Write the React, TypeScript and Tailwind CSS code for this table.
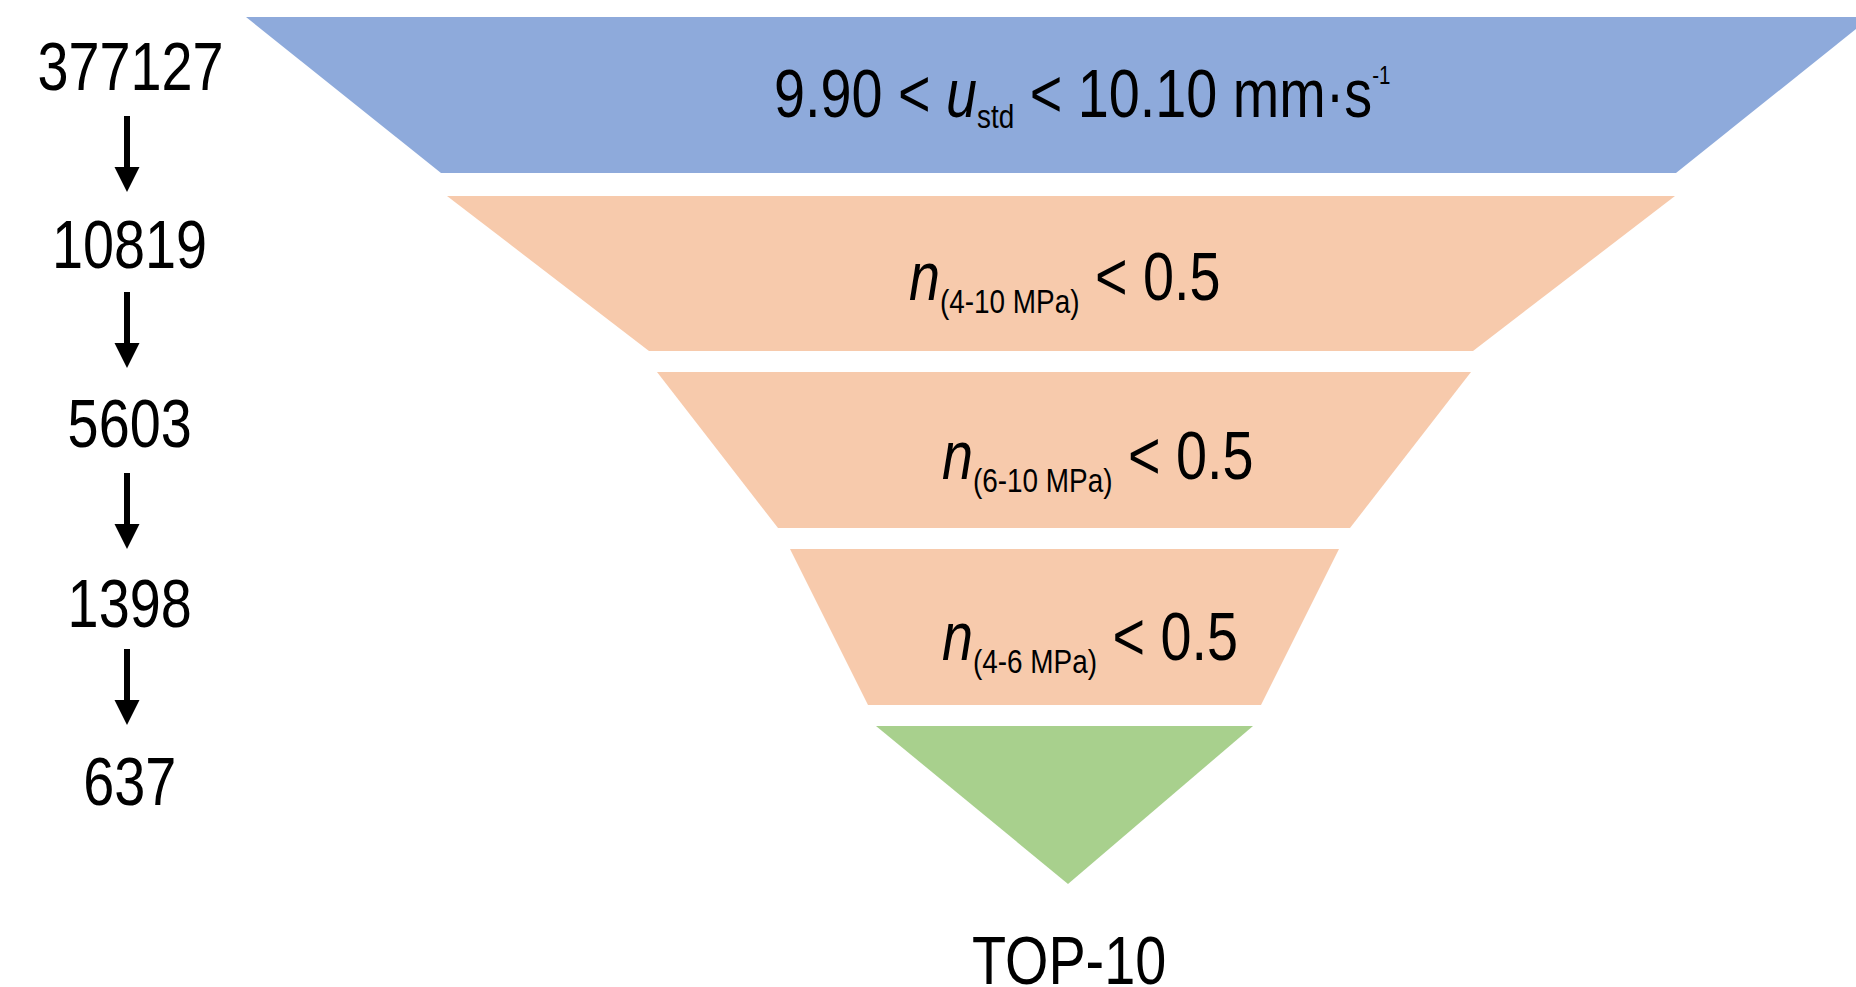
import React from "react";

const FONT = "font-['Liberation_Sans_Narrow','Arial_Narrow','Liberation_Sans',Arial,sans-serif]";

function Arrow({ className = "" }: { className?: string }) {
  return (
    <svg width="26" height="76" viewBox="0 0 26 76" className={"shrink-0 mr-[7px] " + className}>
      <rect x="10" y="0" width="6" height="53" fill="#000" />
      <polygon points="0.5,51 25.5,51 13,76" fill="#000" />
    </svg>
  );
}

function Num({ children, className = "" }: { children: React.ReactNode; className?: string }) {
  return (
    <div className={"text-[68px] leading-[68px] whitespace-nowrap scale-x-[0.82] origin-center " + className}>
      {children}
    </div>
  );
}

function Sub({ children, shift = "align-[-13px]" }: { children: React.ReactNode; shift?: string }) {
  return <span className={"text-[34px] leading-[0] not-italic " + shift}>{children}</span>;
}

export default function App() {
  return (
    <div className={"w-[1856px] h-[987px] overflow-hidden bg-white text-black flex " + FONT}>
      {/* left counts column */}
      <div className="w-[245px] shrink-0 pl-[15px] pt-[32px] flex flex-col items-center">
        <Num>377127</Num>
        <Arrow className="mt-[16px]" />
        <Num className="mt-[18px]">10819</Num>
        <Arrow className="mt-[14px]" />
        <Num className="mt-[21px]">5603</Num>
        <Arrow className="mt-[16px]" />
        <Num className="mt-[20px]">1398</Num>
        <Arrow className="mt-[12px]" />
        <Num className="mt-[22px]">637</Num>
      </div>

      {/* funnel column */}
      <div className="flex-1 min-w-0 flex flex-col items-start pt-[17px]">
        <div className="ml-[1px] w-[1625px] h-[156px] shrink-0 bg-[#8eaadb] [clip-path:polygon(0_0,100%_0,calc(100%_-_195px)_100%,195px_100%)]">
          <div className="pl-[528px] pt-[42px] text-[68px] leading-[68px] whitespace-nowrap">
            <span className="inline-block scale-x-[0.82] origin-left">
              9.90 &lt; <span className="italic">u</span>
              <Sub shift="align-[-11px]">std</Sub> &lt; 10.10 mm·s
              <span className="text-[25px] leading-[0] align-[33px]">-1</span>
            </span>
          </div>
        </div>

        <div className="mt-[23px] ml-[202px] w-[1228px] h-[155px] shrink-0 bg-[#f7caac] [clip-path:polygon(0_0,100%_0,calc(100%_-_202px)_100%,202px_100%)]">
          <div className="pl-[462px] pt-[46px] text-[68px] leading-[68px] whitespace-nowrap">
            <span className="inline-block scale-x-[0.82] origin-left">
              <span className="italic">n</span>
              <Sub>(4-10 MPa)</Sub> &lt; 0.5
            </span>
          </div>
        </div>

        <div className="mt-[21px] ml-[412px] w-[814px] h-[156px] shrink-0 bg-[#f7caac] [clip-path:polygon(0_0,100%_0,calc(100%_-_121px)_100%,121px_100%)]">
          <div className="pl-[285px] pt-[49px] text-[68px] leading-[68px] whitespace-nowrap">
            <span className="inline-block scale-x-[0.82] origin-left">
              <span className="italic">n</span>
              <Sub>(6-10 MPa)</Sub> &lt; 0.5
            </span>
          </div>
        </div>

        <div className="mt-[21px] ml-[545px] w-[549px] h-[156px] shrink-0 bg-[#f7caac] [clip-path:polygon(0_0,100%_0,calc(100%_-_78px)_100%,78px_100%)]">
          <div className="pl-[152px] pt-[53px] text-[68px] leading-[68px] whitespace-nowrap">
            <span className="inline-block scale-x-[0.82] origin-left">
              <span className="italic">n</span>
              <Sub>(4-6 MPa)</Sub> &lt; 0.5
            </span>
          </div>
        </div>

        <div className="mt-[21px] ml-[631px] w-[377px] h-[158px] shrink-0 bg-[#a8d08d] [clip-path:polygon(0_0,100%_0,192px_100%)]" />

        <div className="mt-[54px] ml-[727px] text-[68px] leading-[44px] whitespace-nowrap">
          <span className="inline-block scale-x-[0.82] origin-left">TOP-10</span>
        </div>
      </div>
    </div>
  );
}
